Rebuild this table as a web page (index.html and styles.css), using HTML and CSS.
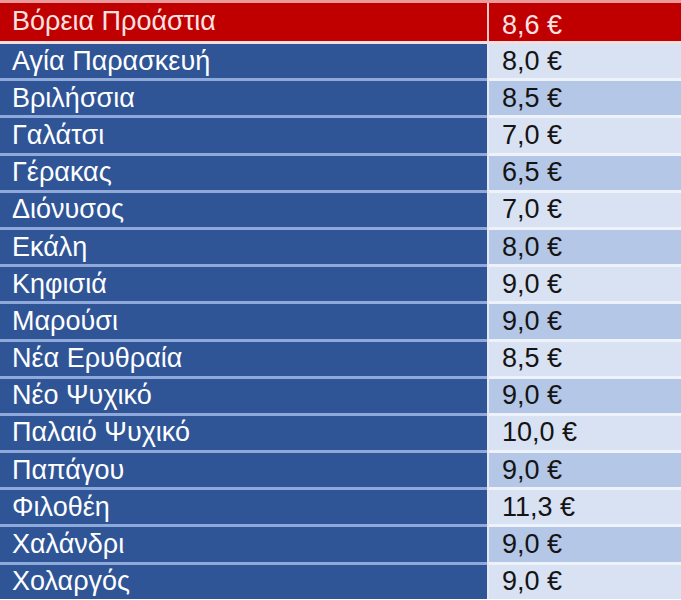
FILE: index.html
```html
<!DOCTYPE html>
<html lang="el">
<head>
<meta charset="utf-8">
<link rel="stylesheet" href="styles.css">
</head>
<body>
<div class="table">
  <div class="row head"><div class="name">Βόρεια Προάστια</div><div class="price">8,6 €</div></div>
  <div class="row a"><div class="name">Αγία Παρασκευή</div><div class="price">8,0 €</div></div>
  <div class="row b"><div class="name">Βριλήσσια</div><div class="price">8,5 €</div></div>
  <div class="row a"><div class="name">Γαλάτσι</div><div class="price">7,0 €</div></div>
  <div class="row b"><div class="name">Γέρακας</div><div class="price">6,5 €</div></div>
  <div class="row a"><div class="name">Διόνυσος</div><div class="price">7,0 €</div></div>
  <div class="row b"><div class="name">Εκάλη</div><div class="price">8,0 €</div></div>
  <div class="row a"><div class="name">Κηφισιά</div><div class="price">9,0 €</div></div>
  <div class="row b"><div class="name">Μαρούσι</div><div class="price">9,0 €</div></div>
  <div class="row a"><div class="name">Νέα Ερυθραία</div><div class="price">8,5 €</div></div>
  <div class="row b"><div class="name">Νέο Ψυχικό</div><div class="price">9,0 €</div></div>
  <div class="row a"><div class="name">Παλαιό Ψυχικό</div><div class="price">10,0 €</div></div>
  <div class="row b"><div class="name">Παπάγου</div><div class="price">9,0 €</div></div>
  <div class="row a"><div class="name">Φιλοθέη</div><div class="price">11,3 €</div></div>
  <div class="row b"><div class="name">Χαλάνδρι</div><div class="price">9,0 €</div></div>
  <div class="row a"><div class="name">Χολαργός</div><div class="price">9,0 €</div></div>
</div>
</body>
</html>
```
FILE: styles.css
```css
html, body {
  margin: 0;
  padding: 0;
  background: #ffffff;
}
.table {
  width: 681px;
  height: 600px;
  overflow: hidden;
  display: flex;
  flex-direction: column;
  border-top: 3px solid #ea9a9a;
  font-family: "Liberation Sans", Arial, sans-serif;
  font-size: 27px;
}
.row {
  display: grid;
  grid-template-columns: 487px 1fr;
  column-gap: 2px;
  height: 34.2px;
  flex: none;
  border-top: 3px solid #f3e3ea;
  background: #e3e9f5;
}
.row .name, .row .price {
  display: flex;
  align-items: center;
  line-height: 1;
}
.row .name {
  padding-left: 12px;
  background: #2f5597;
  color: #ffffff;
  box-shadow: 0 -3px 0 #8fa9db;
}
.row .price {
  padding-left: 13px;
  color: #141414;
}
.row.a .price { background: #d9e2f3; box-shadow: 0 -3px 0 #eef2fa; }
.row.b .price { background: #b4c7e7; box-shadow: 0 -3px 0 #eef2fa; }
.row.head {
  height: 38px;
  border-top: 0;
  background: #f4c9c9;
}
.row.head .name, .row.head .price {
  background: #c00000;
  color: #fbe3e3;
  box-shadow: none;
}
.row.head .name { padding-bottom: 2px; }
.row.head .price { padding-top: 7px; }
.row.head + .row { border-top-color: #f6dede; }
.row.head + .row .name, .row.head + .row .price { box-shadow: 0 -3px 0 #f6dede; }
```
